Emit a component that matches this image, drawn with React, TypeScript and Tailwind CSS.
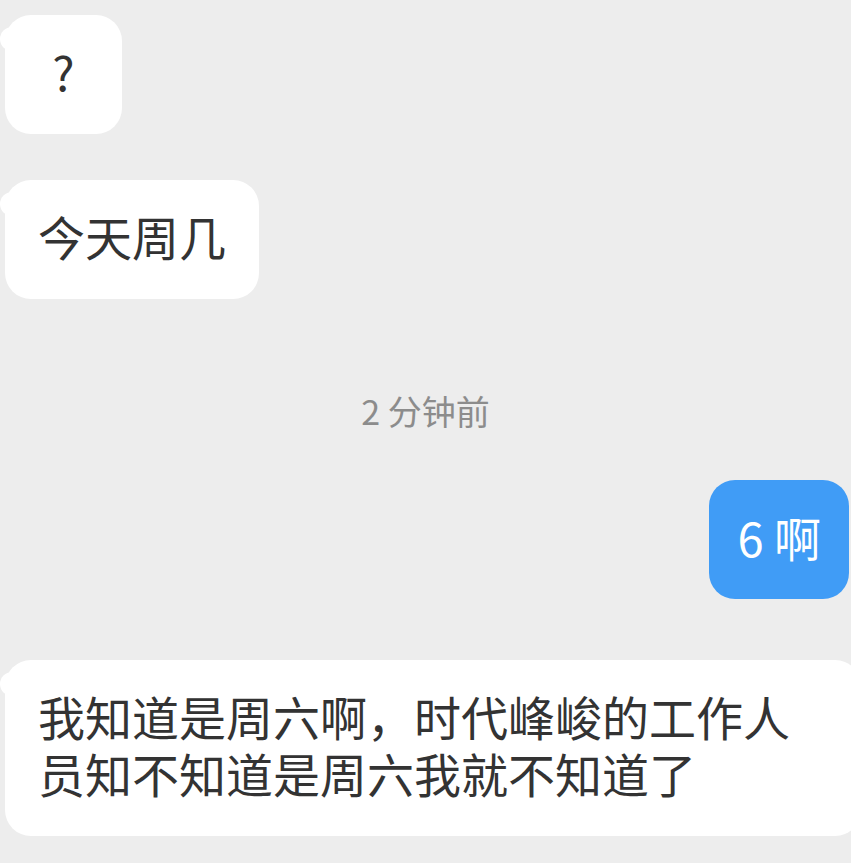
import React from "react";

const font = "font-['Noto_Sans_CJK_SC','Noto_Sans',sans-serif]";

const Tail = () => (
  <span className="absolute -left-[5px] top-[12px] h-[24px] w-[12px] rounded-l-full bg-white" />
);

const LeftBubble = ({ children, className = "" }: { children: React.ReactNode; className?: string }) => (
  <div className={`relative ml-[5px] self-start rounded-[26px] bg-white px-[33px] pb-[35px] pt-[27px] text-[47px] leading-[57px] text-[#333333] ${className}`}>
    <Tail />
    {children}
  </div>
);

export default function App() {
  return (
    <div className={`flex h-[863px] w-full flex-col overflow-hidden bg-[#ededed] ${font}`}>
      <LeftBubble className="mt-[15px] min-w-[117px] text-center">?</LeftBubble>

      <LeftBubble className="mt-[46px]">今天周几</LeftBubble>

      <div className="mt-[92px] text-center text-[34px] leading-[40px] text-[#8c8c8c]">
        2 分钟前
      </div>

      <div className="mr-[2px] mt-[49px] self-end rounded-[26px] bg-[#409cf6] px-[28px] pb-[34px] pt-[28px] text-[47px] leading-[57px] text-white">
        6 啊
      </div>

      <LeftBubble className="mt-[61px] w-[856px] shrink-0">
        <p className="w-[770px]">我知道是周六啊，时代峰峻的工作人员知不知道是周六我就不知道了</p>
      </LeftBubble>
    </div>
  );
}
